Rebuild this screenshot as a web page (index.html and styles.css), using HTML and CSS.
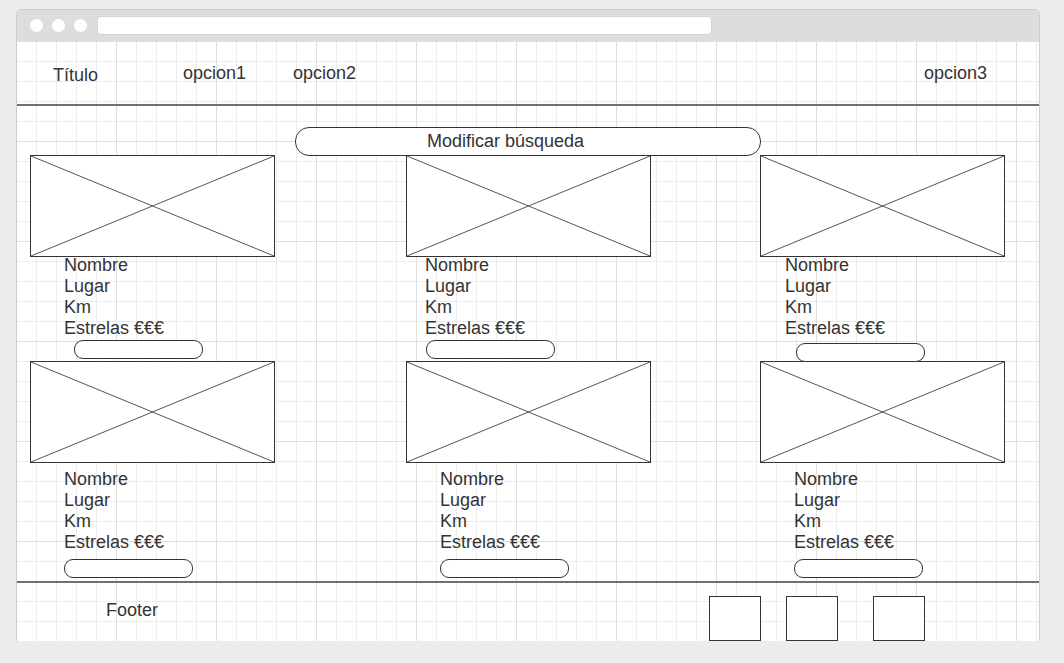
FILE: index.html
```html
<!DOCTYPE html>
<html lang="es">
<head>
<meta charset="utf-8">
<title>Wireframe</title>
<link rel="stylesheet" href="styles.css">
</head>
<body>
<div class="window">
  <div class="titlebar">
    <span class="dot"></span>
    <span class="dot"></span>
    <span class="dot"></span>
    <div class="urlbar"></div>
  </div>
  <div class="canvas">
    <header class="topnav">
      <span class="brand">Título</span>
      <span class="nav-item">opcion1</span>
      <span class="nav-item">opcion2</span>
      <span class="nav-item nav-item--right">opcion3</span>
    </header>
    <main class="results">
      <button class="search-btn">Modificar búsqueda</button>
      <div class="card-grid">
        <article class="card card--top">
          <div class="placeholder"><svg viewBox="0 0 100 100" preserveAspectRatio="none"><line x1="0" y1="0" x2="100" y2="100" vector-effect="non-scaling-stroke"/><line x1="100" y1="0" x2="0" y2="100" vector-effect="non-scaling-stroke"/></svg></div>
          <div class="card-info indent-34"><div>Nombre</div><div>Lugar</div><div>Km</div><div>Estrelas €€€</div></div>
          <div class="card-btn btn-44"></div>
        </article>
        <article class="card card--top">
          <div class="placeholder"><svg viewBox="0 0 100 100" preserveAspectRatio="none"><line x1="0" y1="0" x2="100" y2="100" vector-effect="non-scaling-stroke"/><line x1="100" y1="0" x2="0" y2="100" vector-effect="non-scaling-stroke"/></svg></div>
          <div class="card-info indent-19"><div>Nombre</div><div>Lugar</div><div>Km</div><div>Estrelas €€€</div></div>
          <div class="card-btn btn-20"></div>
        </article>
        <article class="card card--top">
          <div class="placeholder"><svg viewBox="0 0 100 100" preserveAspectRatio="none"><line x1="0" y1="0" x2="100" y2="100" vector-effect="non-scaling-stroke"/><line x1="100" y1="0" x2="0" y2="100" vector-effect="non-scaling-stroke"/></svg></div>
          <div class="card-info indent-25"><div>Nombre</div><div>Lugar</div><div>Km</div><div>Estrelas €€€</div></div>
          <div class="card-btn btn-36 btn-low"></div>
        </article>
        <article class="card card--bottom">
          <div class="placeholder"><svg viewBox="0 0 100 100" preserveAspectRatio="none"><line x1="0" y1="0" x2="100" y2="100" vector-effect="non-scaling-stroke"/><line x1="100" y1="0" x2="0" y2="100" vector-effect="non-scaling-stroke"/></svg></div>
          <div class="card-info indent-34"><div>Nombre</div><div>Lugar</div><div>Km</div><div>Estrelas €€€</div></div>
          <div class="card-btn btn-34"></div>
        </article>
        <article class="card card--bottom">
          <div class="placeholder"><svg viewBox="0 0 100 100" preserveAspectRatio="none"><line x1="0" y1="0" x2="100" y2="100" vector-effect="non-scaling-stroke"/><line x1="100" y1="0" x2="0" y2="100" vector-effect="non-scaling-stroke"/></svg></div>
          <div class="card-info indent-34"><div>Nombre</div><div>Lugar</div><div>Km</div><div>Estrelas €€€</div></div>
          <div class="card-btn btn-34"></div>
        </article>
        <article class="card card--bottom">
          <div class="placeholder"><svg viewBox="0 0 100 100" preserveAspectRatio="none"><line x1="0" y1="0" x2="100" y2="100" vector-effect="non-scaling-stroke"/><line x1="100" y1="0" x2="0" y2="100" vector-effect="non-scaling-stroke"/></svg></div>
          <div class="card-info indent-34"><div>Nombre</div><div>Lugar</div><div>Km</div><div>Estrelas €€€</div></div>
          <div class="card-btn btn-34"></div>
        </article>
      </div>
    </main>
    <footer class="site-footer">
      <span class="footer-label">Footer</span>
      <div class="footer-box"></div>
      <div class="footer-box footer-box--second"></div>
      <div class="footer-box footer-box--third"></div>
    </footer>
  </div>
</div>
</body>
</html>
```
FILE: styles.css
```css
* { box-sizing: border-box; }

html, body {
  margin: 0;
  padding: 0;
}

body {
  background: #ececec;
  font-family: "Liberation Sans", Arial, Helvetica, sans-serif;
  font-size: 18px;
  color: #333333;
  padding-top: 9px;
  padding-left: 16px;
}

.window {
  width: 1024px;
  height: 632px;
  border: 1px solid #cdcdcd;
  border-radius: 5px 5px 0 0;
  background: #ffffff;
  display: flex;
  flex-direction: column;
}

.titlebar {
  height: 31px;
  flex: none;
  background: #dddddd;
  border-radius: 4px 4px 0 0;
  display: flex;
  align-items: center;
  padding-left: 13px;
  gap: 9px;
}

.dot {
  width: 13px;
  height: 13px;
  border-radius: 50%;
  background: #ffffff;
  flex: none;
}

.urlbar {
  margin-left: 1px;
  width: 615px;
  height: 19px;
  background: #ffffff;
  border: 1px solid #d2d2d2;
  border-radius: 4px;
}

.canvas {
  flex: 1;
  display: flex;
  flex-direction: column;
  background-color: #ffffff;
  background-image:
    linear-gradient(to right, #dfdfdf 1px, transparent 1px),
    linear-gradient(to bottom, #dfdfdf 1px, transparent 1px),
    linear-gradient(to right, #ececec 1px, transparent 1px),
    linear-gradient(to bottom, #ececec 1px, transparent 1px);
  background-size: 100px 100px, 100px 100px, 20px 20px, 20px 20px;
  background-position: -1px 0, -1px 0, -1px 0, -1px 0;
}

.topnav {
  height: 65px;
  flex: none;
  border-bottom: 2px solid #707070;
  display: flex;
  align-items: flex-start;
  padding-top: 22px;
  padding-left: 36px;
  line-height: 21px;
}

.brand {
  width: 130px;
  margin-top: 2px;
}

.nav-item {
  width: 110px;
}

.nav-item--right {
  margin-left: auto;
  width: 115px;
}

.results {
  height: 475px;
  flex: none;
  padding-top: 21px;
}

.search-btn {
  display: block;
  margin: 0 0 0 278px;
  width: 466px;
  height: 29px;
  padding: 0 0 0 131px;
  border: 1px solid #333333;
  border-radius: 14px;
  background: #ffffff;
  font: inherit;
  color: inherit;
  line-height: 27px;
  text-align: left;
  position: relative;
  z-index: 1;
}

.card-grid {
  margin-top: -1px;
  padding-left: 13px;
  display: grid;
  grid-template-columns: 376px 354px 245px;
  grid-template-rows: 206px 220px;
}

.card {
  display: flex;
  flex-direction: column;
  align-items: flex-start;
}

.placeholder {
  width: 245px;
  height: 102px;
  border: 1px solid #333333;
  background: #ffffff;
  flex: none;
}

.placeholder svg {
  display: block;
  width: 100%;
  height: 100%;
}

.placeholder line {
  stroke: #555555;
  stroke-width: 1;
}

.card-info {
  line-height: 21px;
  white-space: nowrap;
}

.card--top .card-info { margin-top: -2px; }
.card--bottom .card-info { margin-top: 6px; }

.indent-19 { padding-left: 19px; }
.indent-25 { padding-left: 25px; }
.indent-34 { padding-left: 34px; }

.card-btn {
  width: 129px;
  height: 19px;
  border: 1px solid #333333;
  border-radius: 9px;
  background: #ffffff;
  flex: none;
  position: relative;
  z-index: 1;
}

.card--top .card-btn { margin-top: 1px; }
.card--top .btn-low { margin-top: 4px; }
.card--bottom .card-btn { margin-top: 6px; }

.btn-20 { margin-left: 20px; }
.btn-34 { margin-left: 34px; }
.btn-36 { margin-left: 36px; }
.btn-44 { margin-left: 44px; }

.site-footer {
  flex: 1;
  border-top: 2px solid #707070;
  display: flex;
  align-items: flex-start;
  padding-top: 13px;
  line-height: 21px;
}

.footer-label {
  margin-top: 4px;
  margin-left: 89px;
  width: 603px;
}

.footer-box {
  width: 52px;
  height: 45px;
  border: 1px solid #333333;
  background: #ffffff;
  flex: none;
}

.footer-box--second { margin-left: 25px; }
.footer-box--third { margin-left: 35px; }
```
